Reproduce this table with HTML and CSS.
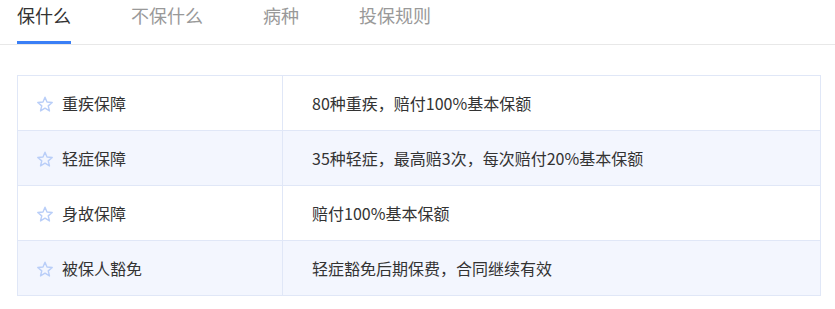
FILE: index.html
```html
<!DOCTYPE html>
<html lang="zh-CN">
<head>
<meta charset="utf-8">
<title>保障内容</title>
<link rel="stylesheet" href="styles.css">
</head>
<body>
  <nav class="tabs">
    <a class="tab active">保什么</a>
    <a class="tab">不保什么</a>
    <a class="tab">病种</a>
    <a class="tab">投保规则</a>
  </nav>

  <table class="cover">
    <tbody>
      <tr>
        <td class="name"><span class="star"><svg viewBox="0 0 16 16"><path d="M8 1.2L10 6.05 15.23 6.45 11.23 9.85 12.47 14.95 8 12.2 3.53 14.95 4.77 9.85 0.77 6.45 6 6.05Z"/></svg></span>重疾保障</td>
        <td class="desc">80种重疾，赔付100%基本保额</td>
      </tr>
      <tr>
        <td class="name"><span class="star"><svg viewBox="0 0 16 16"><path d="M8 1.2L10 6.05 15.23 6.45 11.23 9.85 12.47 14.95 8 12.2 3.53 14.95 4.77 9.85 0.77 6.45 6 6.05Z"/></svg></span>轻症保障</td>
        <td class="desc">35种轻症，最高赔3次，每次赔付20%基本保额</td>
      </tr>
      <tr>
        <td class="name"><span class="star"><svg viewBox="0 0 16 16"><path d="M8 1.2L10 6.05 15.23 6.45 11.23 9.85 12.47 14.95 8 12.2 3.53 14.95 4.77 9.85 0.77 6.45 6 6.05Z"/></svg></span>身故保障</td>
        <td class="desc">赔付100%基本保额</td>
      </tr>
      <tr>
        <td class="name"><span class="star"><svg viewBox="0 0 16 16"><path d="M8 1.2L10 6.05 15.23 6.45 11.23 9.85 12.47 14.95 8 12.2 3.53 14.95 4.77 9.85 0.77 6.45 6 6.05Z"/></svg></span>被保人豁免</td>
        <td class="desc">轻症豁免后期保费，合同继续有效</td>
      </tr>
    </tbody>
  </table>
</body>
</html>
```

FILE: styles.css
```css
html, body {
  margin: 0;
  background: #fff;
  font-family: "Noto Sans CJK SC", "Noto Sans", sans-serif;
  color: #333;
}

.tabs {
  display: flex;
  gap: 60px;
  padding-left: 17px;
  border-bottom: 1px solid #e8e8e8;
}

.tab {
  position: relative;
  height: 44px;
  line-height: 30px;
  font-size: 18px;
  color: #999;
  cursor: pointer;
}

.tab.active {
  color: #333;
}

.tab.active::after {
  content: "";
  position: absolute;
  left: 0;
  right: 0;
  bottom: 0;
  height: 3px;
  background: #3a7ff6;
}

.cover {
  margin: 30px 0 0 17px;
  width: 804px;
  border-collapse: collapse;
  font-size: 16px;
}

.cover td {
  height: 54px;
  padding: 0;
  border: 1px solid #e0e7f7;
  vertical-align: middle;
}

.cover tr:nth-child(even) td {
  background: #f3f6fe;
}

.cover .name {
  width: 245px;
  padding-left: 19px;
}

.cover .desc {
  padding-left: 29px;
}

.star {
  display: inline-block;
  width: 16px;
  height: 16px;
  margin-right: 9px;
  vertical-align: -2px;
}

.star svg {
  display: block;
  width: 16px;
  height: 16px;
  overflow: visible;
  fill: none;
  stroke: #b9cef8;
  stroke-width: 1.4;
  stroke-linejoin: round;
}
```
